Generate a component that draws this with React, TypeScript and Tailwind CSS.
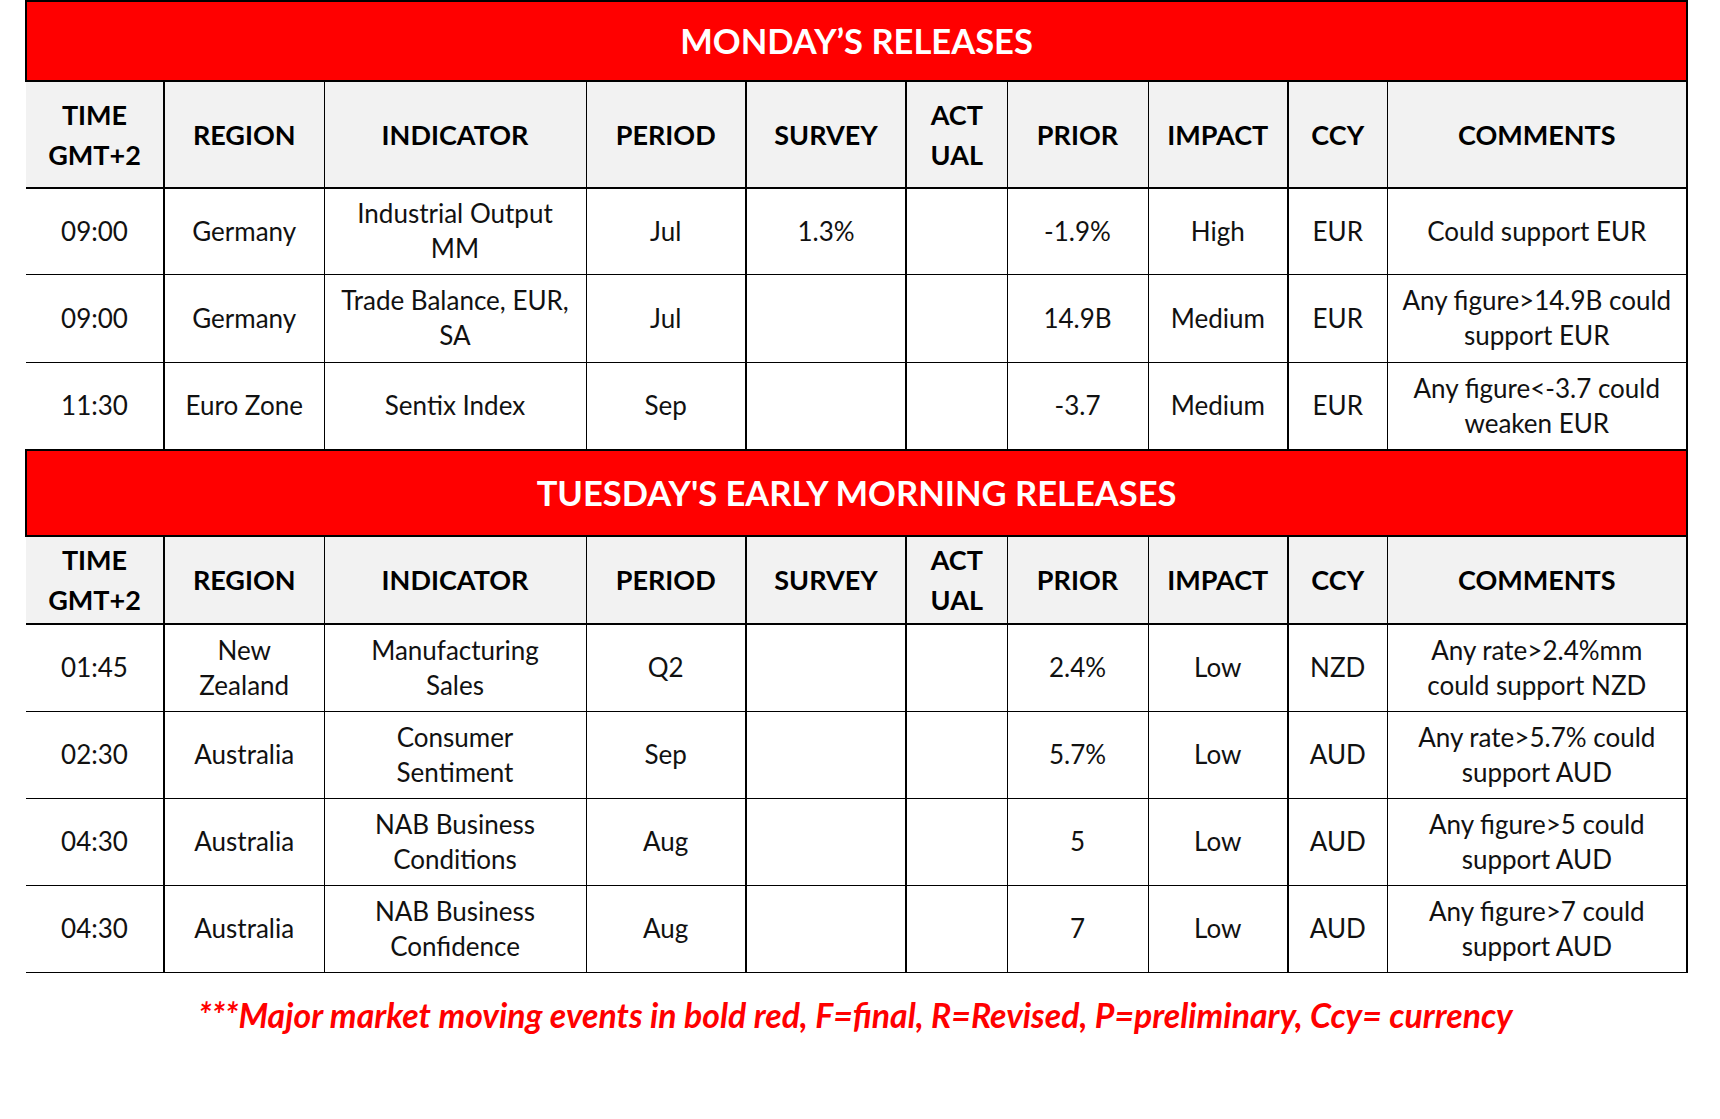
const mondayRows = [
  ["09:00", "Germany", "Industrial Output MM", "Jul", "1.3%", "", "-1.9%", "High", "EUR", "Could support EUR"],
  ["09:00", "Germany", "Trade Balance, EUR, SA", "Jul", "", "", "14.9B", "Medium", "EUR", "Any figure>14.9B could support EUR"],
  ["11:30", "Euro Zone", "Sentix Index", "Sep", "", "", "-3.7", "Medium", "EUR", "Any figure<-3.7 could weaken EUR"],
];

const tuesdayRows = [
  ["01:45", "New Zealand", "Manufacturing Sales", "Q2", "", "", "2.4%", "Low", "NZD", "Any rate>2.4%mm could support NZD"],
  ["02:30", "Australia", "Consumer Sentiment", "Sep", "", "", "5.7%", "Low", "AUD", "Any rate>5.7% could support AUD"],
  ["04:30", "Australia", "NAB Business Conditions", "Aug", "", "", "5", "Low", "AUD", "Any figure>5 could support AUD"],
  ["04:30", "Australia", "NAB Business Confidence", "Aug", "", "", "7", "Low", "AUD", "Any figure>7 could support AUD"],
];

// column widths and right-hand border weights (thick after TIME, PERIOD, SURVEY, IMPACT)
const colWidths = ["w-[138px]", "w-[160px]", "w-[262px]", "w-[160px]", "w-[160px]", "w-[101px]", "w-[141px]", "w-[140px]", "w-[99px]", "w-[300px]"];
const rightBorder = ["border-r-2", "border-r", "border-r", "border-r-2", "border-r-2", "border-r", "border-r", "border-r-2", "border-r", "border-r-2"];

const headers = [
  <>TIME<br />GMT+2</>,
  "REGION",
  "INDICATOR",
  "PERIOD",
  "SURVEY",
  <>ACT<br />UAL</>,
  "PRIOR",
  "IMPACT",
  "CCY",
  "COMMENTS",
];

const lineBreaks: Record<string, React.ReactNode> = {
  "Industrial Output MM": <>Industrial Output<br />MM</>,
  "Trade Balance, EUR, SA": <>Trade Balance, EUR,<br />SA</>,
  "Manufacturing Sales": <>Manufacturing<br />Sales</>,
  "Consumer Sentiment": <>Consumer<br />Sentiment</>,
  "NAB Business Conditions": <>NAB Business<br />Conditions</>,
  "NAB Business Confidence": <>NAB Business<br />Confidence</>,
  "New Zealand": <>New<br />Zealand</>,
  "Any figure>14.9B could support EUR": <>Any figure&gt;14.9B could<br />support EUR</>,
  "Any figure<-3.7 could weaken EUR": <>Any figure&lt;-3.7 could<br />weaken EUR</>,
  "Any rate>2.4%mm could support NZD": <>Any rate&gt;2.4%mm<br />could support NZD</>,
  "Any rate>5.7% could support AUD": <>Any rate&gt;5.7% could<br />support AUD</>,
  "Any figure>5 could support AUD": <>Any figure&gt;5 could<br />support AUD</>,
  "Any figure>7 could support AUD": <>Any figure&gt;7 could<br />support AUD</>,
};

function TitleRow({ title, height }: { title: string; height: string }) {
  return (
    <tr>
      <td
        colSpan={10}
        className={`${height} bg-[#ff0000] border-2 border-black text-center text-white font-bold text-[34.5px] align-middle`}
      >
        {title}
      </td>
    </tr>
  );
}

function HeaderRow({ height }: { height: string }) {
  return (
    <tr>
      {headers.map((h, i) => (
        <td
          key={i}
          className={`${height} ${rightBorder[i]} border-b-2 border-black bg-[#f2f2f2] text-center align-middle font-bold text-[27px] leading-[40px] text-black`}
        >
          {h}
        </td>
      ))}
    </tr>
  );
}

function DataRow({ row, height }: { row: string[]; height: string }) {
  return (
    <tr>
      {row.map((cell, i) => (
        <td
          key={i}
          className={`${height} ${rightBorder[i]} border-b border-black text-center align-middle text-[26px] leading-[35px] text-[#111]`}
        >
          {lineBreaks[cell] ?? cell}
        </td>
      ))}
    </tr>
  );
}

export default function App() {
  return (
    <div className="w-[1720px] min-h-[1119px] bg-white font-['Lato',sans-serif]">
      <div className="pl-[25px]">
        <table className="table-fixed border-collapse w-[1661px]">
          <colgroup>
            {colWidths.map((w, i) => (
              <col key={i} className={w} />
            ))}
          </colgroup>
          <tbody>
            <TitleRow title="MONDAY’S RELEASES" height="h-[80px]" />
            <HeaderRow height="h-[107px]" />
            {mondayRows.map((r, i) => (
              <DataRow key={i} row={r} height={i === 0 ? "h-[86px]" : "h-[88px]"} />
            ))}
            <TitleRow title="TUESDAY'S EARLY MORNING RELEASES" height="h-[86px]" />
            <HeaderRow height="h-[88px]" />
            {tuesdayRows.map((r, i) => (
              <DataRow key={i} row={r} height="h-[87px]" />
            ))}
          </tbody>
        </table>
      </div>
      <p className="mt-[22px] text-center pl-[25px] w-[1686px] text-[#ff0000] font-bold italic text-[33.8px] leading-[40px]">
        ***Major market moving events in bold red, F=final, R=Revised, P=preliminary, Ccy= currency
      </p>
    </div>
  );
}
